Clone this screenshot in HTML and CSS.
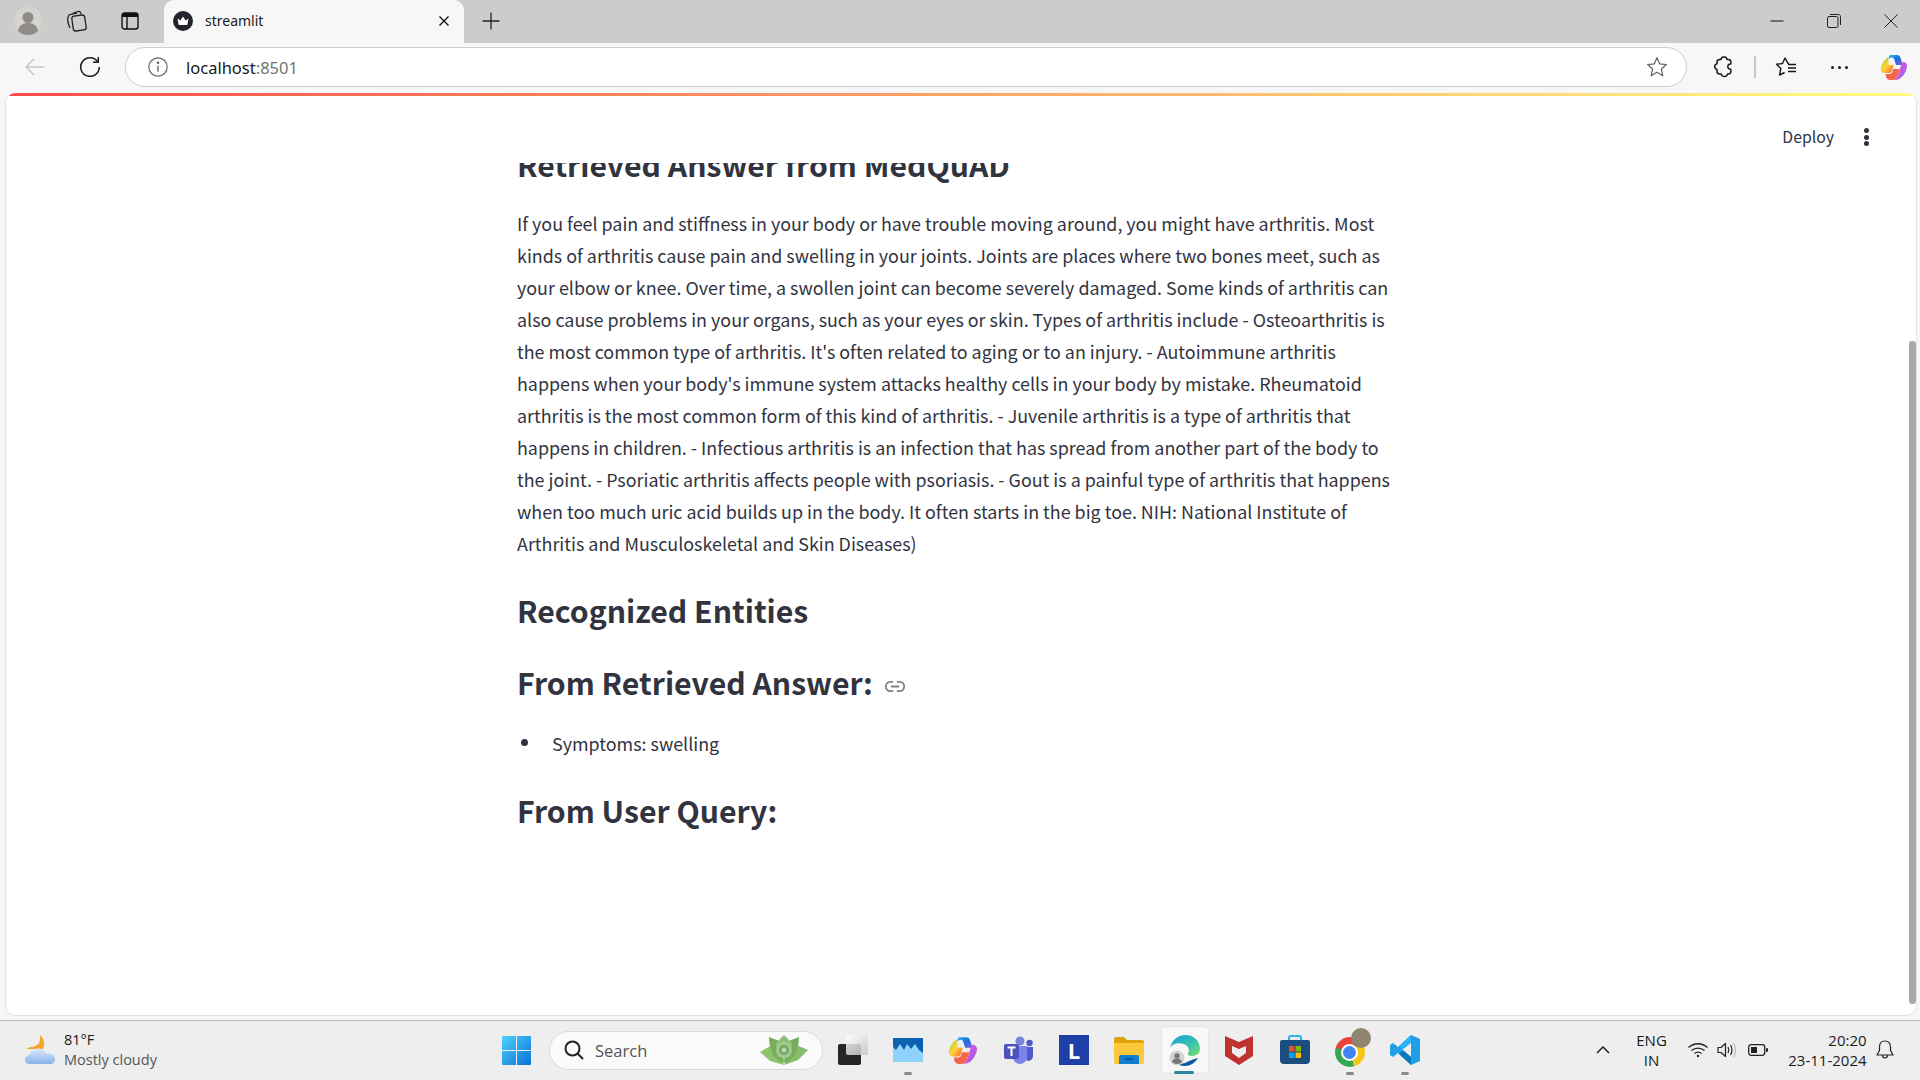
FILE: index.html
```html
<!DOCTYPE html>
<html lang="en">
<head>
    <meta charset="UTF-8">
    <title>streamlit</title>
    <link rel="stylesheet" href="styles.css">
</head>
<body>
    <div class="tab-strip">
        <div class="strip-left">
            <svg class="profile-icon" width="28" height="28" viewBox="0 0 28 28"><circle cx="14" cy="14" r="14" fill="#d6d4d0"/><circle cx="14" cy="10.5" r="5.5" fill="#8f8c88"/><path d="M4 24c1-6 5-8 10-8s9 2 10 8c-2.500 2.500-6 4-10 4s-7.500-1.500-10-4z" fill="#8f8c88"/></svg>
            <svg class="collections-icon" width="22" height="22" viewBox="0 0 22 22" fill="none" stroke="#222" stroke-width="1.3"><rect x="7.500" y="5.500" width="13" height="15" rx="2.500" transform="rotate(-8 14 13)"/><path d="M5 18C3 14 2.500 10 3 7c.2-1.500 1.200-2.500 2.500-2.700L12 3"/><path d="M8 3.300 13 1.500c1-.3 2 .1 2.500 1l.7 1.500"/></svg>
            <svg class="tabs-icon" width="18" height="18" viewBox="0 0 18 18"><rect x="1" y="1" width="16" height="16" rx="2.500" fill="none" stroke="#111" stroke-width="1.4"/><path d="M1 3.500C1 2 2 1 3.500 1h11C16 1 17 2 17 3.500V5H1z" fill="#111"/><path d="M6 5v12" stroke="#111" stroke-width="1.4"/></svg>
        </div>
        <div class="tab">
            <svg width="20" height="20" viewBox="0 0 20 20"><circle cx="10" cy="10" r="10" fill="#22232e"/><path d="M4.500 7.500 7.300 9.500 10 5.500l2.700 4 2.800-2-1.200 6.500H5.700z" fill="#fff"/></svg>
            <span class="tab-title">streamlit</span>
            <svg class="tab-close" width="12" height="12" viewBox="0 0 12 12"><path d="M1.500 1.500l9 9M10.500 1.500l-9 9" stroke="#111" stroke-width="1.400"/></svg>
        </div>
        <svg class="new-tab" width="18" height="18" viewBox="0 0 18 18"><path d="M9 .5v17M.5 9h17" stroke="#222" stroke-width="1.300"/></svg>
        <div class="window-controls">
            <svg width="14" height="14" viewBox="0 0 14 14"><path d="M.5 7h13" stroke="#111" stroke-width="1"/></svg>
            <svg width="14" height="14" viewBox="0 0 14 14" fill="none" stroke="#222" stroke-width="1"><rect x=".5" y="2.500" width="10.500" height="11" rx="1.500"/><path d="M3 .5h8.500c1 0 2 1 2 2V11"/></svg>
            <svg width="14" height="14" viewBox="0 0 14 14"><path d="M.5.500l13 13M13.500.500l-13 13" stroke="#222" stroke-width="1"/></svg>
        </div>
    </div>

    <div class="toolbar">
        <svg class="back-icon" width="20" height="18" viewBox="0 0 20 18" fill="none" stroke="#c6c6c6" stroke-width="1.400"><path d="M19.500 9H1M9 1 1 9l8 8"/></svg>
        <svg class="reload-icon" width="22" height="22" viewBox="0 0 22 22" fill="none" stroke="#1a1a1a" stroke-width="1.500"><path d="M18.500 5.500A9.300 9.300 0 1 0 20.300 11"/><path d="M19.300 1v5.300H14"/></svg>
        <div class="address-bar">
            <svg width="20" height="20" viewBox="0 0 20 20" fill="none" stroke="#666" stroke-width="1.200"><circle cx="10" cy="10" r="9.200"/><path d="M10 8.700v6" stroke-width="1.400"/><circle cx="10" cy="5.800" r=".7" fill="#666"/></svg>
            <span class="url">localhost<span class="url-port">:8501</span></span>
            <svg class="star-icon" width="22" height="22" viewBox="0 0 22 22" fill="none" stroke="#666" stroke-width="1.300"><path d="M11 1.700l2.800 6.200 6.600.7-5 4.500 1.400 6.600-5.800-3.400-5.800 3.400 1.400-6.600-5-4.500 6.600-.7z" stroke-linejoin="round"/></svg>
        </div>
        <svg class="extensions-icon" width="20" height="22" viewBox="0 0 20 22" fill="none" stroke="#1a1a1a" stroke-width="1.500"><path d="M7 3.500C7.300 1.500 9 .8 10.500 1c1.500.2 2.500 1.300 2.500 2.500h1.500c1.300 0 2.300 1 2.300 2.300V8c-1.800-.3-3 1-3 2.500s1.200 3 3 2.700v2.500c0 1.500-1 2.300-2.300 2.300h-1c-.2 1.500-1.500 2.500-3 2.500S7.500 19.500 7.300 18H5.500c-1.500 0-2.500-1-2.500-2.500v-2C1.500 13.200.7 12 .7 10.500S1.500 8 3 7.700V6c0-1.500 1-2.500 2.500-2.500z" stroke-linejoin="round"/></svg>
        <div class="toolbar-divider"></div>
        <svg class="favorites-icon" width="22" height="20" viewBox="0 0 22 20" fill="none" stroke="#1a1a1a" stroke-width="1.400"><path d="M14 6.500 13 6.300 10 1 7.500 6.500 1.500 7.300l4.300 4.200-1.200 6.500 5-2.500" stroke-linejoin="round"/><path d="M13 7.500h8M13 11h8M13 14.500h8"/></svg>
        <div class="more-dots"><i></i><i></i><i></i></div>
        <svg class="copilot-icon" width="28" height="28" viewBox="0 0 28 28">
            <defs>
                <linearGradient id="copilotA" x1="0" y1="0" x2="1" y2="1"><stop offset="0" stop-color="#2ec5e8"/><stop offset=".5" stop-color="#1a6fe0"/><stop offset="1" stop-color="#7b5ae0"/></linearGradient>
                <linearGradient id="copilotB" x1="0" y1="0" x2="1" y2="1"><stop offset="0" stop-color="#8fd63a"/><stop offset=".5" stop-color="#ffd23a"/><stop offset="1" stop-color="#f5632a"/></linearGradient>
                <linearGradient id="copilotC" x1="0" y1="0" x2="1" y2="1"><stop offset="0" stop-color="#e85ad0"/><stop offset="1" stop-color="#9a5cf0"/></linearGradient>
            </defs>
            <path d="M10 2h7c2 0 3 1 3.500 3L23 12h-7l-1.500-5C14 5 13 4.200 11.500 4.500 8.500 5 7 8 6 11z" fill="url(#copilotA)"/>
            <path d="M8 4C5 6 2 10 .8 15c-.5 3 1 5 4 5h4c2 0 3-1 3.500-3l1.500-5H9z" fill="url(#copilotB)"/>
            <path d="M23 9c2.500 0 4.500 2 4 5-1 5-4 10-8 12-1.500.8-3 1-4.500 1H14c2-1 3.500-3 4.500-6l2-7c.5-2 1.500-4 2.500-5z" fill="url(#copilotC)"/>
            <path d="M13 16h7l-2 6c-.7 2.500-2.500 5-5.500 5H10c-2 0-3.500-1.500-4-3l-.5-3h4c1.500 0 2.500-1 3-2.500z" fill="#f4664a"/>
        </svg>
    </div>

    <main class="page">
        <div class="decoration"></div>
        <header class="app-header">
            <span class="deploy">Deploy</span>
            <div class="kebab"><i></i><i></i><i></i></div>
        </header>
        <div class="scroll-area">
            <div class="content">
                <h3 class="first-heading">Retrieved Answer from MedQuAD</h3>
                <p>If you feel pain and stiffness in your body or have trouble moving around, you might have arthritis. Most kinds of arthritis cause pain and swelling in your joints. Joints are places where two bones meet, such as your elbow or knee. Over time, a swollen joint can become severely damaged. Some kinds of arthritis can also cause problems in your organs, such as your eyes or skin. Types of arthritis include - Osteoarthritis is the most common type of arthritis. It's often related to aging or to an injury. - Autoimmune arthritis happens when your body's immune system attacks healthy cells in your body by mistake. Rheumatoid arthritis is the most common form of this kind of arthritis. - Juvenile arthritis is a type of arthritis that happens in children. - Infectious arthritis is an infection that has spread from another part of the body to the joint. - Psoriatic arthritis affects people with psoriasis. - Gout is a painful type of arthritis that happens when too much uric acid builds up in the body. It often starts in the big toe. NIH: National Institute of Arthritis and Musculoskeletal and Skin Diseases)</p>
                <h3 class="entities-heading">Recognized Entities</h3>
                <h3 class="answer-heading">From Retrieved Answer:
                    <svg class="anchor-icon" width="22" height="13" viewBox="0 0 24 14" fill="none" stroke="#7f8087" stroke-width="2"><path d="M10 2H7a5 5 0 0 0 0 10h3M14 2h3a5 5 0 0 1 0 10h-3M7.500 7h9"/></svg>
                </h3>
                <ul>
                    <li>Symptoms: swelling</li>
                </ul>
                <h3 class="query-heading">From User Query:</h3>
            </div>
            <div class="scroll-thumb"></div>
        </div>
    </main>

    <footer class="taskbar">
        <div class="weather">
            <svg width="30" height="30" viewBox="0 0 30 30">
                <defs><linearGradient id="cloud" x1="0" y1="0" x2="0" y2="1"><stop offset="0" stop-color="#dbe9fb"/><stop offset="1" stop-color="#86b2ec"/></linearGradient></defs>
                <path d="M15 0c4 3 5 9 3 14H1c3-1 3-2 5-2 1 .5 6-1 8-4 1-2.500 1.500-5 1-8z" fill="#f5a623"/>
                <path d="M5 29c-3 0-5-2-5-4.500S2 20 5 19.500c.5-3 4-6 8-6 4.500 0 7 2 8 5 4.500-.5 9 1 9 5.500 0 3-2 5-5 5z" fill="url(#cloud)"/>
            </svg>
            <div class="weather-text">
                <div>81°F</div>
                <div class="weather-label">Mostly cloudy</div>
            </div>
        </div>
        <div class="task-center">
            <svg class="start-icon" width="29" height="29" viewBox="0 0 29 29">
                <defs><linearGradient id="win" x1="0" y1="0" x2="1" y2="1"><stop offset="0" stop-color="#4fd0fb"/><stop offset="1" stop-color="#0772d8"/></linearGradient></defs>
                <path d="M1 0h13v14H0V1a1 1 0 0 1 1-1zM15 0h13a1 1 0 0 1 1 1v13H15zM0 15h14v14H1a1 1 0 0 1-1-1zM15 15h14v13a1 1 0 0 1-1 1H15z" fill="url(#win)"/>
            </svg>
            <div class="search-box">
                <svg width="20" height="20" viewBox="0 0 20 20" fill="none" stroke="#222" stroke-width="2"><circle cx="8.500" cy="8.500" r="7"/><path d="M13.500 13.500 19 19"/></svg>
                <span class="search-label">Search</span>
                <svg class="search-flower" width="48" height="30" viewBox="0 0 48 30">
                    <path d="M0 17 14 9l10 21-14-4z" fill="#8cc46e"/><path d="M48 15 34 9 24 30l14-5z" fill="#86bd68"/>
                    <path d="M9 2l13 5 2 21C14 26 9 14 9 2zM39 2l-13 5-2 21c10-2 15-14 15-26z" fill="#79ad5e"/>
                    <path d="M24 0l8 8-2 14H18L16 8z" fill="#8fbf78"/>
                    <circle cx="24" cy="15" r="8" fill="#a2cc8c"/><circle cx="24" cy="15" r="5" fill="#6ea568"/><circle cx="24" cy="15" r="2.500" fill="#b9d8a6"/>
                </svg>
            </div>
            <div class="task-icons">
                <div class="task-slot">
                    <svg width="30" height="30" viewBox="0 0 30 30"><defs><linearGradient id="view" x1="0" y1="0" x2="1" y2="1"><stop offset="0" stop-color="#fff"/><stop offset="1" stop-color="#c4c4c4"/></linearGradient></defs><rect x="0" y="9" width="23" height="21" rx="2" fill="#262626"/><rect x="8" y="0" width="22" height="20" rx="2" fill="url(#view)" opacity=".85"/></svg>
                </div>
                <div class="task-slot running">
                    <svg width="30" height="24" viewBox="0 0 30 24"><rect width="30" height="24" fill="#8fd2fb"/><path d="M0 0h30v15l-4-3-4-6-4 5-4-5-3 6-4-6-4 6-3-3z" fill="#0a62b0"/></svg>
                </div>
                <div class="task-slot">
                    <svg width="30" height="30" viewBox="0 0 28 28"><path d="M10 2h7c2 0 3 1 3.500 3L23 12h-7l-1.500-5C14 5 13 4.200 11.500 4.500 8.500 5 7 8 6 11z" fill="url(#copilotA)"/><path d="M8 4C5 6 2 10 .8 15c-.5 3 1 5 4 5h4c2 0 3-1 3.500-3l1.500-5H9z" fill="url(#copilotB)"/><path d="M23 9c2.500 0 4.500 2 4 5-1 5-4 10-8 12-1.500.8-3 1-4.500 1H14c2-1 3.500-3 4.500-6l2-7c.5-2 1.500-4 2.500-5z" fill="url(#copilotC)"/><path d="M13 16h7l-2 6c-.7 2.500-2.500 5-5.500 5H10c-2 0-3.500-1.500-4-3l-.5-3h4c1.500 0 2.500-1 3-2.500z" fill="#f4664a"/></svg>
                </div>
                <div class="task-slot">
                    <svg width="30" height="28" viewBox="0 0 30 28"><circle cx="16" cy="5" r="4.500" fill="#7b83d6"/><circle cx="25.500" cy="7" r="3.200" fill="#5059c9"/><path d="M19 11h10v9a5 5 0 0 1-5 5h-1z" fill="#5059c9"/><path d="M9 10h14v11a7 7 0 0 1-14 0z" fill="#7b83eb"/><rect x="0" y="8" width="15" height="15" rx="2" fill="#4b53bc"/><path d="M3.500 11.500h8M7.500 11.500v8.500" stroke="#fff" stroke-width="2"/></svg>
                </div>
                <div class="task-slot">
                    <div class="app-tile">L</div>
                </div>
                <div class="task-slot">
                    <svg width="30" height="27" viewBox="0 0 30 27"><path d="M0 2a2 2 0 0 1 2-2h8l3 3h15a2 2 0 0 1 2 2v4H0z" fill="#e0a30a"/><path d="M0 6h30v19a2 2 0 0 1-2 2H2a2 2 0 0 1-2-2z" fill="#fdc83c"/><path d="M5 27v-7a2 2 0 0 1 2-2h16a2 2 0 0 1 2 2v7z" fill="#0f7fd0"/><path d="M11 22h8" stroke="#084b80" stroke-width="1.500"/></svg>
                </div>
                <div class="task-slot active">
                    <svg width="31" height="31" viewBox="0 0 31 31">
                        <defs><linearGradient id="edge" x1="0" y1="0" x2="1" y2="1"><stop offset="0" stop-color="#1b9de2"/><stop offset=".55" stop-color="#35c1b0"/><stop offset="1" stop-color="#7fe06a"/></linearGradient></defs>
                        <path d="M1 13C3 5 9 0 16 0c9 0 15 6 15 14 0 5-4 7-8 7-3 0-5-1-4-3 2-2 1-7-4-9C9 7 3 9 1 13z" fill="url(#edge)"/>
                        <path d="M29 23c-3 5-8 8-13 8-4 0-7-1-9-3 4 1 8 1 11-1 3-1 6-3 11-4z" fill="#0c5aa6"/>
                        <circle cx="8" cy="23" r="7.500" fill="#d4d4d2"/><circle cx="8" cy="21" r="2.700" fill="#777"/><path d="M3 27c.5-2.500 2.500-3.500 5-3.500s4.500 1 5 3.500a7 7 0 0 1-10 0z" fill="#777"/>
                    </svg>
                </div>
                <div class="task-slot">
                    <svg width="28" height="30" viewBox="0 0 28 30"><path d="M0 1l14 6 14-6v20L14 30 0 21z" fill="#c0312f"/><path d="M7 11l7 3 7-3v7l-7 5-7-5z" fill="#eee"/></svg>
                </div>
                <div class="task-slot">
                    <svg width="30" height="30" viewBox="0 0 30 30"><path d="M9 7V3a2 2 0 0 1 2-2h8a2 2 0 0 1 2 2v4" fill="none" stroke="#29b4ee" stroke-width="2"/><path d="M2 5h26a2 2 0 0 1 2 2v18a4 4 0 0 1-4 4H4a4 4 0 0 1-4-4V7a2 2 0 0 1 2-2z" fill="#1b4d80"/><rect x="9" y="11" width="5.500" height="5.500" fill="#f25022"/><rect x="15.500" y="11" width="5.500" height="5.500" fill="#7fba00"/><rect x="9" y="17.500" width="5.500" height="5.500" fill="#00a4ef"/><rect x="15.500" y="17.500" width="5.500" height="5.500" fill="#ffb900"/></svg>
                </div>
                <div class="task-slot running">
                    <div class="chrome-icon">
                        <div class="chrome-core"></div>
                        <div class="chrome-badge"></div>
                    </div>
                </div>
                <div class="task-slot running">
                    <svg width="30" height="30" viewBox="0 0 30 30"><path d="M21 0l9 4v22l-9 4L8 18l-5 4-3-2v-10l3-2 5 4z" fill="#1e9fe8"/><path d="M21 0 9 11l4 4L21 8z" fill="#2cb2f5"/><path d="M21 8v14l-9-7z" fill="#eee"/><path d="M21 30 9 19l4-4 8 7z" fill="#0a78c2"/></svg>
                </div>
            </div>
        </div>
        <div class="tray">
            <svg class="tray-chevron" width="14" height="8" viewBox="0 0 14 8" fill="none" stroke="#222" stroke-width="1.500"><path d="M1 7l6-6 6 6"/></svg>
            <div class="lang">ENG<br>IN</div>
            <svg class="wifi-icon" width="20" height="16" viewBox="0 0 20 16" fill="none" stroke="#222" stroke-width="1.300"><path d="M.5 5.500c5.500-5 13.500-5 19 0M3.500 8.500c3.800-3.300 9.200-3.300 13 0M6.500 11.500c2-1.600 5-1.600 7 0"/><circle cx="10" cy="14" r="1.200" fill="#222" stroke="none"/></svg>
            <svg class="volume-icon" width="20" height="16" viewBox="0 0 20 16" fill="none" stroke="#222" stroke-width="1.200"><path d="M1 5.500h3L8.500 1.500v13L4 10.500H1z" stroke-linejoin="round"/><path d="M11 5c1 1.800 1 4.200 0 6M13.500 3c1.800 3 1.800 7 0 10"/><path d="M16.500 1c2.500 4.200 2.500 9.800 0 14" stroke="#bbb"/></svg>
            <svg class="battery-icon" width="20" height="12" viewBox="0 0 20 12"><rect x=".7" y=".7" width="16" height="10.600" rx="2.500" fill="none" stroke="#222" stroke-width="1.300"/><rect x="3" y="3" width="6" height="6" fill="#222"/><rect x="18" y="4" width="2" height="4" rx="1" fill="#222"/></svg>
            <div class="clock">20:20<br>23-11-2024</div>
            <svg class="bell-icon" width="18" height="20" viewBox="0 0 18 20" fill="none" stroke="#222" stroke-width="1.200"><path d="M9 1C5.500 1 3.500 3.500 3.500 7v3.500L1 15h16l-2.500-4.500V7C14.500 3.500 12.500 1 9 1z" stroke-linejoin="round"/><path d="M6.500 15c0 4 5 4 5 0"/></svg>
        </div>
    </footer>
</body>
</html>
```

FILE: styles.css
```css
html, body {
    margin: 0;
    height: 100%;
}
body {
    width: 1920px;
    height: 1080px;
    display: flex;
    flex-direction: column;
    overflow: hidden;
    background: #f7f7f7;
    font-family: "Noto Sans", sans-serif;
    color: #1a1a1a;
}

/* tab strip */
.tab-strip {
    height: 43px;
    flex: none;
    box-sizing: border-box;
    padding-bottom: 1px;
    display: flex;
    background: #cccccc;
    align-items: center;
}
.strip-left {
    width: 164px;
    display: flex;
    align-items: center;
}
.profile-icon {
    margin-left: 14px;
}
.collections-icon {
    margin-left: 23px;
}
.tabs-icon {
    margin-left: 34px;
}
.tab {
    width: 300px;
    height: 44px;
    box-sizing: border-box;
    padding: 0 14px 2px 9px;
    margin-bottom: -1px;
    display: flex;
    align-items: center;
    background: #f7f7f7;
    border-radius: 10px 10px 0 0;
}
.tab-title {
    margin-left: 12px;
    font-size: 14px;
    flex: 1;
}
.new-tab {
    margin-left: 18px;
}
.window-controls {
    margin-left: auto;
    display: flex;
    align-items: center;
    gap: 43px;
    padding-right: 22px;
}

/* toolbar */
.toolbar {
    height: 50px;
    flex: none;
    box-sizing: border-box;
    padding-bottom: 2px;
    display: flex;
    align-items: center;
    background: #f7f7f7;
}
.back-icon {
    margin-left: 25px;
}
.reload-icon {
    margin-left: 34px;
}
.address-bar {
    width: 1562px;
    height: 40px;
    box-sizing: border-box;
    margin-left: 24px;
    padding: 0 18px 0 22px;
    display: flex;
    align-items: center;
    background: #fff;
    border: 1.5px solid #cfcfcf;
    border-radius: 20px;
}
.url {
    margin-left: 18px;
    font-size: 16.500px;
}
.url-port {
    color: #70757a;
}
.star-icon {
    margin-left: auto;
}
.extensions-icon {
    margin-left: 27px;
}
.toolbar-divider {
    width: 1.500px;
    height: 22px;
    margin-left: 20px;
    background: #c8c8c8;
}
.favorites-icon {
    margin-left: 19px;
}
.more-dots {
    margin-left: 34px;
    display: flex;
    gap: 4px;
}
.more-dots i {
    width: 3px;
    height: 3px;
    border-radius: 50%;
    background: #1a1a1a;
}
.copilot-icon {
    margin-left: 32px;
}

/* streamlit page */
.page {
    height: 923px;
    flex: none;
    margin: 0 3px 0 5px;
    box-sizing: border-box;
    display: flex;
    flex-direction: column;
    background: #fff;
    border: 1.500px solid #e4e4e4;
    border-top: none;
    border-radius: 10px;
    overflow: hidden;
    font-family: "Noto Sans CJK SC", "Noto Sans", sans-serif;
    color: #31333f;
}
.decoration {
    height: 3px;
    flex: none;
    background: linear-gradient(90deg, #ff4b4b, #fffd80);
}
.app-header {
    height: 67px;
    flex: none;
    box-sizing: border-box;
    padding: 22px 47px 0 0;
    display: flex;
    justify-content: flex-end;
    align-items: center;
}
.deploy {
    font-size: 15.800px;
    line-height: 24px;
    margin-top: -7px;
}
.kebab {
    margin-left: 30px;
    margin-top: -7px;
    display: flex;
    flex-direction: column;
    gap: 1.500px;
}
.kebab i {
    width: 5px;
    height: 5px;
    border-radius: 50%;
    background: #31333f;
}
.scroll-area {
    flex: 1;
    position: relative;
    overflow: hidden;
}
.scroll-thumb {
    position: absolute;
    right: 0;
    top: 178px;
    width: 7px;
    height: 663px;
    border-radius: 3px;
    background: #a9a9ad;
}
.content {
    width: 880px;
    margin: -21px 0 0 511px;
}
.content h3 {
    margin: 0;
    font-size: 30.200px;
    font-weight: 600;
    line-height: 44px;
}
.content p {
    margin: 21px 0 0;
    font-size: 17.900px;
    line-height: 32px;
}
.entities-heading {
    padding-top: 29px;
}
.answer-heading {
    padding-top: 27.500px;
    display: flex;
    align-items: center;
    gap: 11px;
}
.anchor-icon {
    margin-top: 9px;
}
.content ul {
    margin: 23px 0 0;
    padding-left: 0;
    list-style: none;
    font-size: 17.900px;
    line-height: 32px;
}
.content li {
    display: flex;
    align-items: center;
    gap: 24px;
    padding-left: 4px;
}
.content li::before {
    content: "";
    width: 7px;
    height: 7px;
    border-radius: 50%;
    background: #31333f;
}
.query-heading {
    padding-top: 29px;
}

/* taskbar */
.taskbar {
    height: 60px;
    flex: none;
    margin-top: 4px;
    box-sizing: border-box;
    padding-bottom: 1px;
    border-top: 1.500px solid #bdbdbd;
    display: flex;
    align-items: center;
    background: #eeeeee;
    font-family: "Open Sans", sans-serif;
}
.weather {
    width: 502px;
    flex: none;
    padding-left: 25px;
    box-sizing: border-box;
    display: flex;
    align-items: center;
    gap: 9px;
    font-size: 14.500px;
    line-height: 20px;
}
.weather-label {
    color: #555;
}
.task-center {
    display: flex;
    align-items: center;
}
.search-box {
    width: 274px;
    height: 39px;
    box-sizing: border-box;
    margin-left: 18px;
    padding: 0 14px;
    display: flex;
    align-items: center;
    background: #fafafa;
    border: 1px solid #dadada;
    border-radius: 20px;
    font-size: 16.500px;
    color: #555;
}
.search-label {
    margin-left: 11px;
}
.search-flower {
    margin-left: auto;
}
.task-icons {
    display: flex;
    margin-left: 2.500px;
}
.task-slot {
    width: 55.200px;
    height: 48px;
    position: relative;
    display: flex;
    align-items: center;
    justify-content: center;
}
.task-slot.running::after,
.task-slot.active::after {
    content: "";
    position: absolute;
    bottom: -1px;
    left: 50%;
    width: 8px;
    height: 3px;
    margin-left: -4px;
    border-radius: 2px;
    background: #8a8a8a;
}
.task-slot.active::before {
    content: "";
    position: absolute;
    left: 4px;
    right: 3px;
    top: 0;
    bottom: 0;
    background: #f8f8f8;
    border: 1px solid #e6e6e6;
    border-radius: 5px;
}
.task-slot.active::after {
    width: 20px;
    margin-left: -10px;
    background: #2a8a9e;
    bottom: 0;
}
.task-slot.active svg {
    position: relative;
}
.app-tile {
    width: 30px;
    height: 30px;
    display: flex;
    align-items: center;
    justify-content: center;
    background: #1e3fa8;
    color: #fff;
    font-size: 22px;
    font-weight: 700;
}
.chrome-icon {
    width: 30px;
    height: 30px;
    border-radius: 50%;
    position: relative;
    margin-top: 4px;
    background: conic-gradient(#e8443a 0 45deg, #f5c518 45deg 165deg, #34a853 165deg 285deg, #e8443a 285deg);
    display: flex;
    align-items: center;
    justify-content: center;
}
.chrome-core {
    width: 13px;
    height: 13px;
    border-radius: 50%;
    background: #3f86f4;
    border: 2.500px solid #fff;
}
.chrome-badge {
    position: absolute;
    top: -9px;
    right: -6px;
    width: 20px;
    height: 20px;
    border-radius: 50%;
    background: #8f8470;
}
.tray {
    flex: 1;
    display: flex;
    align-items: center;
    padding-left: 163px;
    font-size: 15px;
    line-height: 20px;
}
.lang {
    margin-left: 18px;
    width: 48px;
    text-align: center;
}
.wifi-icon {
    margin-left: 12px;
}
.volume-icon {
    margin-left: 9px;
}
.battery-icon {
    margin-left: 11px;
}
.clock {
    width: 96px;
    text-align: right;
    margin-left: 3px;
    margin-top: -1px;
}
.bell-icon {
    margin-left: 9px;
}
```
